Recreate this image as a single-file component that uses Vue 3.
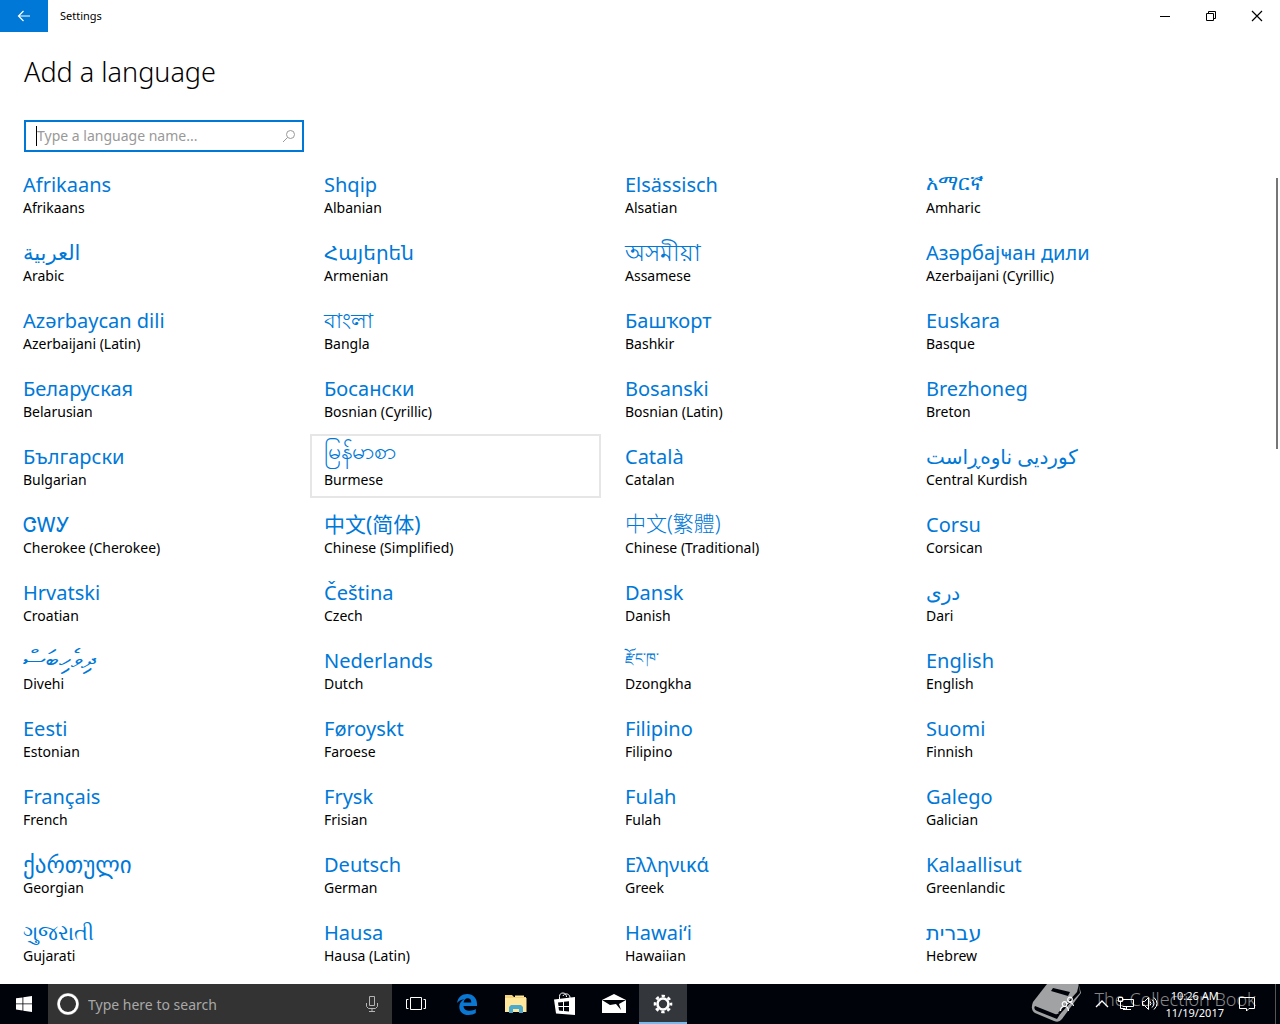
<script setup>
import { ref } from 'vue'

const query = ref('')
const languages = [
  ['Afrikaans', 'Afrikaans'], ['Shqip', 'Albanian'], ['Elsässisch', 'Alsatian'], ['አማርኛ', 'Amharic', 'medium high'],
  ['العربية', 'Arabic', 'medium'], ['Հայերեն', 'Armenian'], ['অসমীয়া', 'Assamese', 'large'], ['Азәрбајҹан дили', 'Azerbaijani (Cyrillic)'],
  ['Azərbaycan dili', 'Azerbaijani (Latin)'], ['বাংলা', 'Bangla', 'medium'], ['Башҡорт', 'Bashkir'], ['Euskara', 'Basque'],
  ['Беларуская', 'Belarusian'], ['Босански', 'Bosnian (Cyrillic)'], ['Bosanski', 'Bosnian (Latin)'], ['Brezhoneg', 'Breton'],
  ['Български', 'Bulgarian'], ['မြန်မာစာ', 'Burmese', 'large raised'], ['Català', 'Catalan'], ['کوردیی ناوەڕاست', 'Central Kurdish'],
  ['ᏣᎳᎩ', 'Cherokee (Cherokee)'], ['中文(简体)', 'Chinese (Simplified)', 'medium'], ['中文(繁體)', 'Chinese (Traditional)', 'medium light'], ['Corsu', 'Corsican'],
  ['Hrvatski', 'Croatian'], ['Čeština', 'Czech'], ['Dansk', 'Danish'], ['درى', 'Dari'],
  ['ދިވެހިބަސް', 'Divehi', 'xlarge'], ['Nederlands', 'Dutch'], ['རྫོང་ཁ་', 'Dzongkha', 'small'], ['English', 'English'],
  ['Eesti', 'Estonian'], ['Føroyskt', 'Faroese'], ['Filipino', 'Filipino'], ['Suomi', 'Finnish'],
  ['Français', 'French'], ['Frysk', 'Frisian'], ['Fulah', 'Fulah'], ['Galego', 'Galician'],
  ['ქართული', 'Georgian', 'large'], ['Deutsch', 'German'], ['Ελληνικά', 'Greek'], ['Kalaallisut', 'Greenlandic'],
  ['ગુજરાતી', 'Gujarati', 'medium'], ['Hausa', 'Hausa (Latin)'], ['Hawaiʻi', 'Hawaiian'], ['עברית', 'Hebrew', 'medium'],
].map(([native, name, size = '']) => ({ native, name, size }))
</script>

<template>
  <div class="screen">
    <header class="titlebar">
      <button class="back" aria-label="Back">
        <svg width="16" height="16" viewBox="0 0 16 16" fill="none" stroke="#fff" stroke-width="1.200"><path d="M14 8H2.500M7.500 3L2.500 8l5 5" /></svg>
      </button>
      <span class="app-name">Settings</span>
      <div class="caption">
        <button aria-label="Minimize"><svg width="12" height="12"><path d="M1 6.500h10" stroke="#000" /></svg></button>
        <button aria-label="Restore"><svg width="12" height="12" fill="none" stroke="#000"><path d="M1.500 3.500h7v7h-7zM3.500 3.500v-2h7v7h-2" /></svg></button>
        <button aria-label="Close"><svg width="12" height="12"><path d="M1 1l10 10M11 1L1 11" stroke="#000" stroke-width="1.200" /></svg></button>
      </div>
    </header>

    <main class="content">
      <h1>Add a language</h1>
      <div class="search">
        <span class="caret"></span>
        <input v-model="query" type="text" aria-label="Type a language name" placeholder="Type a language name..." />
        <svg width="14" height="14" viewBox="0 0 14 14" fill="none" stroke="#999"><circle cx="8.500" cy="5.500" r="4" /><path d="M5.500 8.500L1 13" /></svg>
      </div>
      <div class="list">
        <button v-for="l in languages" :key="l.name" class="tile" :class="{ hovered: l.name === 'Burmese' }">
          <span class="native" :class="l.size"><bdi>{{ l.native }}</bdi></span>
          <span class="name">{{ l.name }}</span>
        </button>
      </div>
      <div class="scroll-thumb"></div>
    </main>

    <footer class="taskbar">
      <button class="task" aria-label="Start">
        <svg width="16" height="16" viewBox="0 0 16 16" fill="#fff"><path d="M0 2.300L6.500 1.400V7.500H0zM7.300 1.300L16 0v7.500H7.300zM0 8.300h6.500v6.200L0 13.600zM7.300 8.300H16V16l-8.700-1.300z" /></svg>
      </button>
      <div class="cortana">
        <svg width="24" height="24" viewBox="0 0 24 24" fill="none"><circle cx="12" cy="12" r="9.500" stroke="#999" stroke-width="3" /><circle cx="12" cy="12" r="9.300" stroke="#fff" stroke-width="2.400" /></svg>
        <input type="text" aria-label="Search Windows" placeholder="Type here to search" />
        <svg width="14" height="18" viewBox="0 0 14 18" fill="none" stroke="#b4b4b4"><path d="M4.500 1.500h5v9h-5zM1.500 8v3.500l2 2h7l2-2V8M7 13.500V16M4 16.500h6" /></svg>
      </div>
      <button class="task" aria-label="Task view">
        <svg width="20" height="16" viewBox="0 0 20 16" fill="none" stroke="#fff"><path d="M4.500 1.500h11v12h-11zM2.500 3.500h-2v9h2M17.500 3.500h2v9h-2" /></svg>
      </button>
      <button class="task edge" aria-label="Microsoft Edge">
        <svg width="22" height="22" viewBox="0 0 22 22" fill="#0a78d2"><path d="M1 10C2 4 6 1 11.200 1 17.500 1 21 5.500 21 11v2H7.500c.2 3.300 3 4.800 6.300 4.800 2.300 0 4.300-.6 6-1.700v4C18 21.300 15.500 22 12.500 22 7 22 3.300 18.800 3.300 13.700c0-3.500 2-6.200 5-7.500C4.800 6.500 2.500 8 1 10zM7.600 9.500h7.700C15.300 6.700 13.900 5.300 11.600 5.300 9.300 5.300 8 7 7.600 9.500z" /></svg>
      </button>
      <button class="task" aria-label="File Explorer">
        <svg width="22" height="20" viewBox="0 0 22 20"><path d="M0 1h7l2 2h12v15H0z" fill="#f2d27a" /><path d="M0 4h21.500v14H0z" fill="#ffe79c" /><path d="M10 1.500h9V3h-9z" fill="#ffe79c" /><path d="M4 19v-6l2-2h10l2 2v6h-4v-4H8v4z" fill="#4aabcf" /></svg>
      </button>
      <button class="task" aria-label="Store">
        <svg width="22" height="24" viewBox="0 0 22 24"><path d="M5.500 7V4.500C5.500 2 7 1 9 1s3.500 1.500 3.500 4M9 4c1-3 6-3 7 1v1" fill="none" stroke="#fff" /><path d="M0 7.500L21 5v18L2 21.500z" fill="#fff" /><path d="M4 10.500l5-.5v4H4.500zM10 9.800l5-.6V14h-5zM4.500 15H9v4l-4-.4zM10 15h5v4.600l-5-.5z" fill="#000309" /></svg>
      </button>
      <button class="task" aria-label="Mail">
        <svg width="24" height="20" viewBox="0 0 24 20"><path d="M0 6L12 0l12 6v13H0z" fill="#fff" /><path d="M0 6l8 5 6-1 5 6-2-6 7-4z" fill="#000309" /></svg>
      </button>
      <button class="task active" aria-label="Settings">
        <svg width="20" height="20" viewBox="0 0 20 20"><circle cx="10" cy="10" r="8" fill="none" stroke="#fff" stroke-width="2.600" stroke-dasharray="3.300 2.983" stroke-dashoffset="1.650" /><circle cx="10" cy="10" r="5.500" fill="none" stroke="#fff" stroke-width="2.600" /></svg>
      </button>

      <div class="watermark">
        <svg width="52" height="40" viewBox="0 0 52 40"><path d="M16 0H47.500L50 9 31 35Q28 39 23 37L4 29Q-1 26 2 18z" fill="#a0a2a4" /><path d="M4 22l20 8q4 1 7-3l-5 8L6 27q-4-2-2-5z" fill="#000309" /><path d="M48 0l1 9-20 21-2-1L46 8z" fill="#000309" /><path d="M22 4l17 4-2 4-17-5z" fill="#000309" /></svg>
        <span>The Collection Book</span>
      </div>
      <div class="tray">
        <button aria-label="People"><svg width="16" height="16" viewBox="0 0 16 16" fill="none" stroke="#fff" stroke-width="1.200"><circle cx="11" cy="3.500" r="2.300" /><circle cx="5.500" cy="8" r="2.300" /><path d="M1.500 15c0-6 8-6 8 0M8 8c3-3 6-1 6.500 2" /></svg></button>
        <button class="chevron" aria-label="Show hidden icons"><svg width="14" height="8" viewBox="0 0 14 8" fill="none" stroke="#fff" stroke-width="1.300"><path d="M1 7l6-6 6 6" /></svg></button>
        <button aria-label="Network"><svg width="18" height="16" viewBox="0 0 18 16" fill="none" stroke="#fff"><path d="M5.500 3.500h11v7h-11M9.500 10.500v3M6 13.500h8M1.500 1.500h4v4h-4zM3.500 5.500v7h5" /></svg></button>
        <button aria-label="Volume"><svg width="18" height="16" viewBox="0 0 18 16" fill="none" stroke="#fff"><path d="M1.500 5.500h2l4-4v12l-4-4h-2zM9 5.500q2 2 0 4M11 3.500q4 4 0 8M13 1.500q6 6 0 12" /></svg></button>
        <button class="clock"><span>10:26 AM</span><span>11/19/2017</span></button>
        <button class="notes" aria-label="Action Center"><svg width="18" height="18" viewBox="0 0 18 18" fill="none" stroke="#fff"><path d="M1.500 2.500h15v11H11L8.500 16v-2.500h-7z" /></svg></button>
      </div>
    </footer>
  </div>
</template>

<style>
body { background: #fff; }
</style>

<style scoped>
.screen {
  min-height: 100vh;
  display: flex;
  flex-direction: column;
  font-family: "Noto Sans", "Noto Sans CJK SC", "DejaVu Sans", sans-serif;
  color: #000;
}
button { border: 0; padding: 0; margin: 0; background: none; font: inherit; color: inherit; }
input { border: 0; padding: 0; outline: 0; background: none; font: inherit; min-width: 0; flex: 1; }
svg { display: block; flex: none; }

.titlebar { display: flex; align-items: center; height: 32px; }
.back { width: 48px; height: 32px; background: #0078d7; display: grid; place-items: center; }
.app-name { margin-left: 12px; font-size: 11px; line-height: 14px; }
.caption { margin-left: auto; display: flex; }
.caption button { width: 46px; height: 32px; display: grid; place-items: center; }

.content { flex: 1; position: relative; }
h1 { margin: 20px 24px 28px; font-weight: 300; font-size: 27px; line-height: 40px; }
.search {
  box-sizing: border-box;
  width: 280px;
  height: 32px;
  margin-left: 24px;
  padding: 0 6px 0 10px;
  border: 2px solid #0078d7;
  display: flex;
  align-items: center;
  font-size: 14px;
}
.search input { padding-bottom: 2px; }
.search input::placeholder { color: #999; opacity: 1; }
.caret { width: 1px; height: 20px; background: #000; }

.list {
  display: grid;
  grid-template-columns: repeat(auto-fill, 291px);
  gap: 4px 10px;
  padding: 10px 9px;
}
.tile {
  box-sizing: border-box;
  height: 64px;
  padding: 7px 12px 5px;
  border: 2px solid transparent;
  display: flex;
  flex-direction: column;
  align-items: flex-start;
  text-align: left;
}
.tile.hovered { border-color: #e6e6e6; }
.native { font-size: 20px; line-height: 28px; height: 27px; color: #0078d7; white-space: nowrap; }
.native.small { font-size: 14px; line-height: 22px; }
.native.medium { font-size: 21px; line-height: 26px; }
.native.large { font-size: 23px; line-height: 26px; }
.native.xlarge { font-size: 26px; line-height: 22px; }
.native.high { line-height: 22px; }
.native.raised { line-height: 14px; }
.native.light { font-family: "Noto Sans", "Noto Sans CJK TC", sans-serif; font-weight: 300; line-height: 24px; }
.name { font-size: 14px; line-height: 20px; }
.scroll-thumb { position: absolute; top: 146px; right: 2px; width: 2px; height: 271px; background: #767676; }

.taskbar { position: relative; display: flex; height: 40px; background: #000309; color: #fff; }
.task { width: 48px; display: grid; place-items: center; }
.task.edge { margin-left: 3px; }
.task + .task { margin-right: 1px; }
.task.active { background: #33363a; box-shadow: inset 0 -2px #76b9ed; }
.cortana {
  box-sizing: border-box;
  width: 344px;
  padding: 0 13px 0 8px;
  background: #333;
  display: flex;
  align-items: center;
  gap: 8px;
  font-size: 14px;
}
.cortana input::placeholder { color: #a8a8a8; opacity: 1; }
.watermark { position: absolute; right: 24px; top: 0; display: flex; gap: 12px; color: #858585; font-weight: 300; font-size: 18px; line-height: 30px; }
.tray { position: relative; margin-left: auto; margin-right: 4px; padding-right: 19px; border-right: 1px solid #555; display: flex; align-items: center; gap: 6px; }
.chevron { margin: 0 2px 0 14px; }
.clock { display: flex; flex-direction: column; align-items: center; font-size: 11px; line-height: 17px; }
.notes { margin-left: 8px; }
</style>
